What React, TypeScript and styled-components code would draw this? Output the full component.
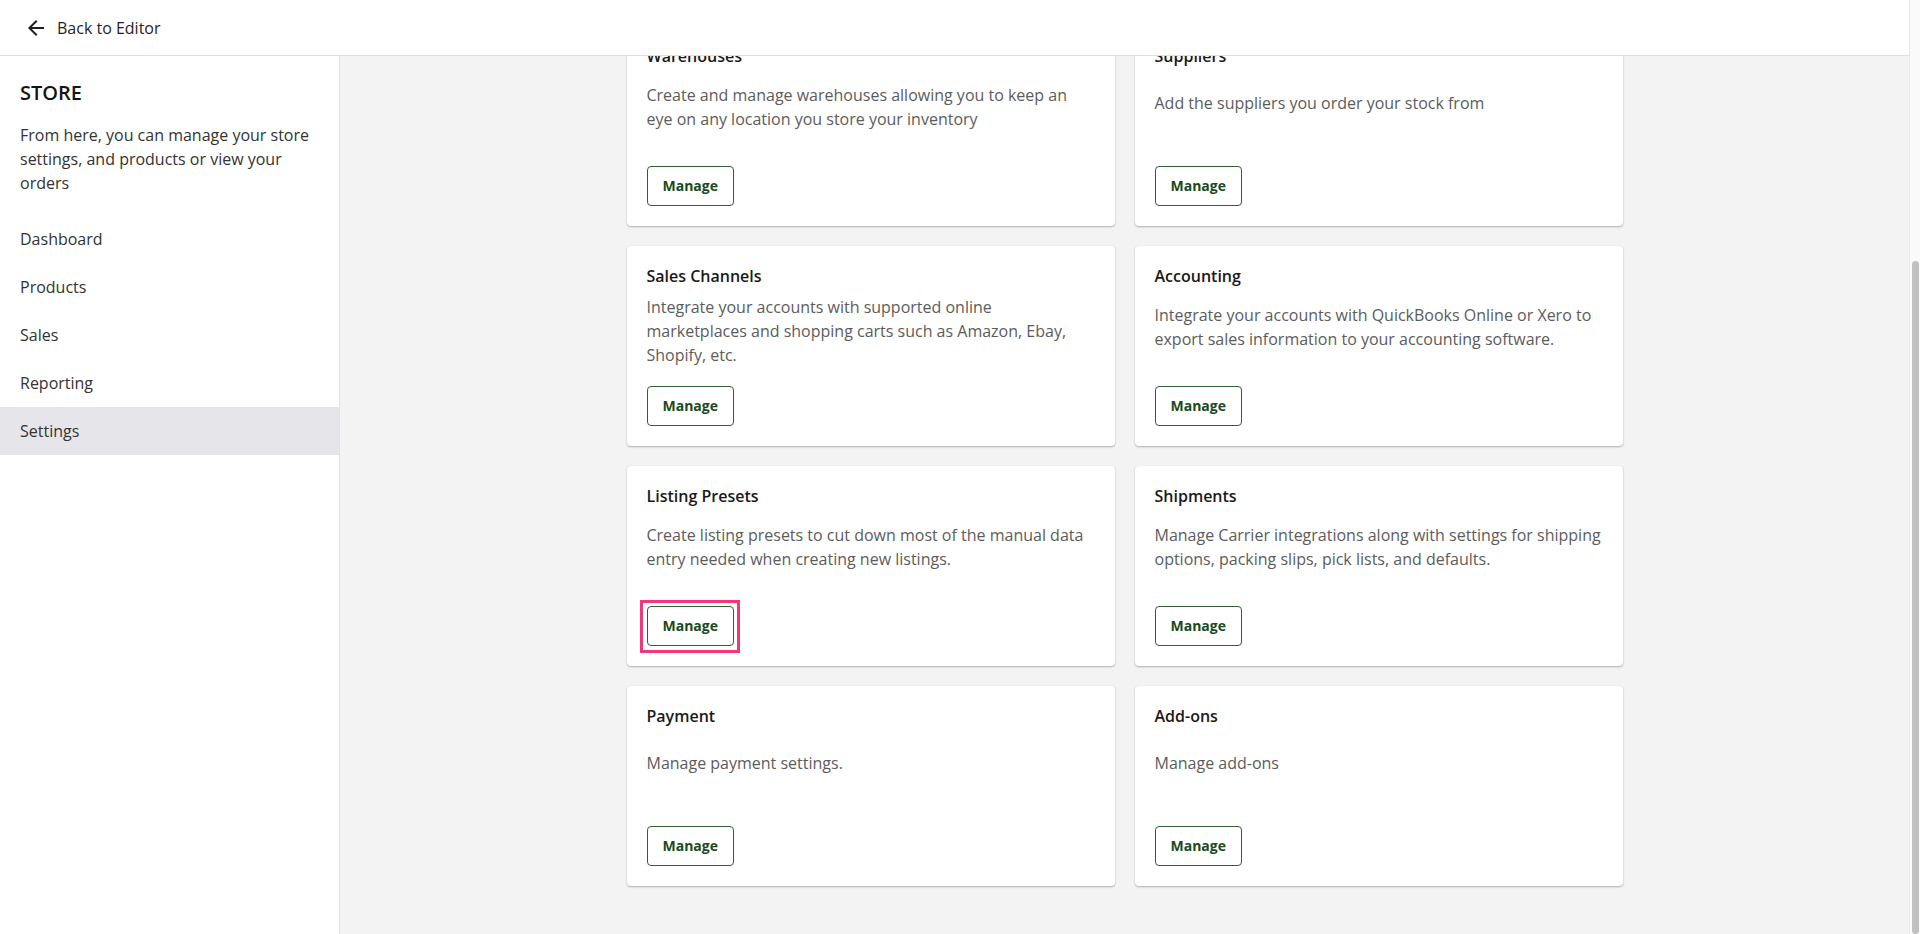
import { useLayoutEffect, useRef, useState } from 'react'
import styled, { createGlobalStyle } from 'styled-components'
import { MdArrowBack } from 'react-icons/md'

const GlobalStyle = createGlobalStyle`
  html, body {
    margin: 0;
    padding: 0;
    height: 100%;
    overflow: hidden;
    background: #f3f3f3;
    font-family: 'Open Sans', 'Noto Sans', sans-serif;
    font-size: 16px;
    color: #1c1c1c;
  }
  * {
    box-sizing: border-box;
  }
`

const Viewport = styled.div`
  height: 100vh;
  display: flex;
`

// the page scrolls inside this box; its bar is drawn by ScrollRail
const Page = styled.div`
  flex: 1;
  min-width: 0;
  overflow-y: auto;
  background: #f3f3f3;
  scrollbar-width: none;
  &::-webkit-scrollbar {
    display: none;
  }
`

const ScrollRail = styled.div`
  position: relative;
  width: 11px;
  flex-shrink: 0;
  background: #fafafa;
  border-left: 1px solid #e6e6e6;
`

const ScrollThumb = styled.div`
  position: absolute;
  left: 2px;
  right: 1px;
  background: #c1c1c1;
  border-radius: 4px;
`

const Header = styled.header`
  position: sticky;
  top: 0;
  z-index: 10;
  height: 56px;
  background: white;
  border-bottom: 1px solid #dedede;
  display: flex;
  align-items: center;
  gap: 9px;
  padding: 0 24px;
  font-size: 16px;
  color: #1f1f1f;
  cursor: pointer;
  > svg {
    width: 24px;
    height: 24px;
    fill: #1f1f1f;
  }
`

const Body = styled.div`
  display: flex;
  align-items: flex-start;
`

const Sidebar = styled.aside`
  position: sticky;
  top: 56px;
  width: 340px;
  flex-shrink: 0;
  height: calc(100vh - 56px);
  background: white;
  border-right: 1px solid #e2e2e2;
  padding-top: 23px;
`

const StoreTitle = styled.h1`
  margin: 0 0 16px;
  padding: 0 20px;
  font-size: 20px;
  line-height: 28px;
  font-weight: 600;
  color: #141414;
`

const StoreText = styled.p`
  margin: 0 0 20px;
  padding: 0 20px;
  line-height: 24px;
  color: #333;
`

const NavList = styled.ul`
  list-style: none;
  margin: 0;
  padding: 0;
`

const NavItem = styled.li<{ $active?: boolean }>`
  height: 48px;
  display: flex;
  align-items: center;
  padding: 0 20px;
  color: #333;
  background: ${(p) => (p.$active ? '#e6e6ea' : 'transparent')};
  cursor: pointer;
`

const Main = styled.main`
  flex: 1;
  padding: 332px 0 48px;
`

const Grid = styled.div`
  max-width: 996px;
  margin: 0 auto;
  display: grid;
  grid-template-columns: 1fr 1fr;
  gap: 20px;
`

const Card = styled.section`
  height: 200px;
  background: white;
  border-radius: 4px;
  box-shadow: 0 1px 2px rgba(0, 0, 0, 0.28), 0 0 1px rgba(0, 0, 0, 0.08);
  padding: 20px;
  display: flex;
  flex-direction: column;
  justify-content: space-between;
  align-items: flex-start;
`

const CardTitle = styled.h2`
  margin: 0;
  font-size: 16px;
  line-height: 20px;
  font-weight: 600;
  color: #1a1a1a;
`

const CardText = styled.p`
  margin: 0;
  line-height: 24px;
  color: #5c5c5c;
`

const Filler = styled.div``

const ManageButton = styled.button<{ $highlight?: boolean }>`
  position: relative;
  height: 40px;
  padding: 0 15px;
  background: white;
  border: 1px solid #2f5f33;
  border-radius: 4px;
  font-family: inherit;
  font-size: 14px;
  font-weight: 700;
  color: #1b4a20;
  cursor: pointer;
  &::after {
    content: '';
    display: ${(p) => (p.$highlight ? 'block' : 'none')};
    position: absolute;
    top: -7px;
    left: -8px;
    right: -7px;
    bottom: -8px;
    border: 3px solid #f2377b;
    pointer-events: none;
  }
`

const navItems = ['Dashboard', 'Products', 'Sales', 'Reporting', 'Settings']

const cards = [
  {
    title: 'Warehouses',
    text: 'Create and manage warehouses allowing you to keep an eye on any location you store your inventory',
  },
  { title: 'Suppliers', text: 'Add the suppliers you order your stock from' },
  {
    title: 'Sales Channels',
    text: 'Integrate your accounts with supported online marketplaces and shopping carts such as Amazon, Ebay, Shopify, etc.',
  },
  {
    title: 'Accounting',
    text: 'Integrate your accounts with QuickBooks Online or Xero to export sales information to your accounting software.',
  },
  {
    title: 'Listing Presets',
    text: 'Create listing presets to cut down most of the manual data entry needed when creating new listings.',
    highlight: true,
  },
  {
    title: 'Shipments',
    text: 'Manage Carrier integrations along with settings for shipping options, packing slips, pick lists, and defaults.',
  },
  { title: 'Payment', text: 'Manage payment settings.' },
  { title: 'Add-ons', text: 'Manage add-ons' },
]

function App() {
  const pageRef = useRef<HTMLDivElement>(null)
  const [thumb, setThumb] = useState({ top: 0, height: 0 })

  const updateThumb = () => {
    const page = pageRef.current
    if (!page) return
    const ratio = page.clientHeight / page.scrollHeight
    setThumb({ top: page.scrollTop * ratio, height: page.clientHeight * ratio })
  }

  useLayoutEffect(() => {
    const page = pageRef.current
    if (page) page.scrollTop = page.scrollHeight
    updateThumb()
  }, [])

  return (
    <Viewport>
      <GlobalStyle />
      <Page ref={pageRef} onScroll={updateThumb}>
        <Header>
          <MdArrowBack />
          <span>Back to Editor</span>
        </Header>
        <Body>
          <Sidebar>
            <StoreTitle>STORE</StoreTitle>
            <StoreText>From here, you can manage your store settings, and products or view your orders</StoreText>
            <NavList>
              {navItems.map((item) => (
                <NavItem key={item} $active={item === 'Settings'}>
                  {item}
                </NavItem>
              ))}
            </NavList>
          </Sidebar>
          <Main>
            <Grid>
              {cards.map((card) => (
                <Card key={card.title}>
                  <CardTitle>{card.title}</CardTitle>
                  <CardText>{card.text}</CardText>
                  <Filler />
                  <ManageButton $highlight={card.highlight}>Manage</ManageButton>
                </Card>
              ))}
            </Grid>
          </Main>
        </Body>
      </Page>
      <ScrollRail>
        <ScrollThumb style={{ top: thumb.top, height: thumb.height }} />
      </ScrollRail>
    </Viewport>
  )
}

export default App
